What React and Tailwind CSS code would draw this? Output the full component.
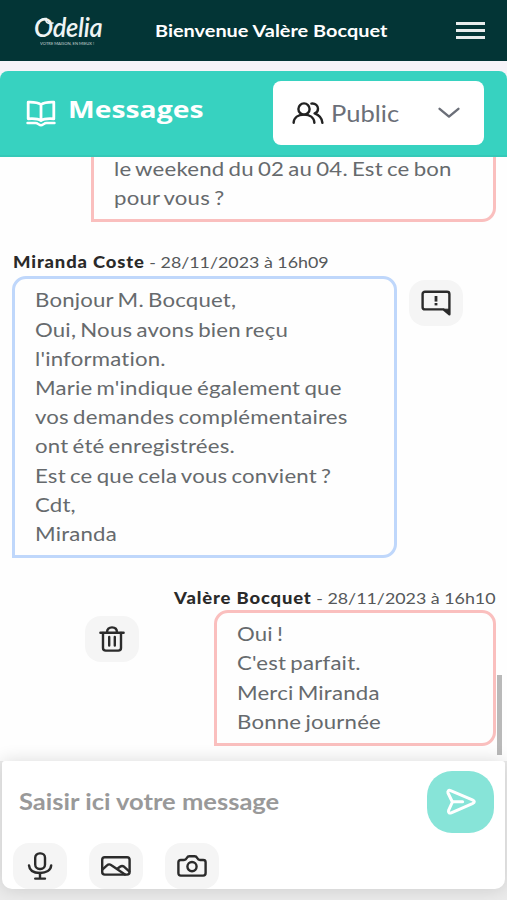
import React, { useState } from "react";

const MESSAGES = [
  {
    id: 1,
    mine: true,
    cut: true,
    lines: ["le weekend du 02 au 04. Est ce bon", "pour vous ?"],
  },
  {
    id: 2,
    mine: false,
    author: "Miranda Coste",
    date: "28/11/2023 à 16h09",
    lines: [
      "Bonjour M. Bocquet,",
      "Oui, Nous avons bien reçu",
      "l'information.",
      "Marie m'indique également que",
      "vos demandes complémentaires",
      "ont été enregistrées.",
      "Est ce que cela vous convient ?",
      "Cdt,",
      "Miranda",
    ],
  },
  {
    id: 3,
    mine: true,
    author: "Valère Bocquet",
    date: "28/11/2023 à 16h10",
    lines: ["Oui !", "C'est parfait.", "Merci Miranda", "Bonne journée"],
  },
];

const Icon = ({ children, className = "", width = 30, height = 28, strokeWidth = 2.4 }) => (
  <svg
    className={className}
    width={width}
    height={height}
    viewBox={`0 0 ${width} ${height}`}
    fill="none"
    stroke="currentColor"
    strokeWidth={strokeWidth}
    strokeLinecap="round"
    strokeLinejoin="round"
  >
    {children}
  </svg>
);

const BookIcon = () => (
  <Icon className="text-white" width={30} height={27} strokeWidth={2.8}>
    <path d="M15 4.6C12.5 2.8 8 2 2.2 2.2V18.8C8 18.4 12 18.4 15 20.6C18 18.4 22 18.4 27.8 18.8V2.2C22 2 17.5 2.8 15 4.6ZM15 4.6V20" />
    <path d="M1.5 23H9.5C12 23 13 25.2 15 25.2S18 23 20.5 23H28.5" strokeWidth={2.4} />
  </Icon>
);

const PeopleIcon = () => (
  <Icon className="text-[#222]" width={32} height={22} strokeWidth={2.4}>
    <circle cx="12" cy="7" r="5.6" />
    <path d="M1.6 20.8C2 15.6 6.2 12.6 12 12.6S22 15.6 22.4 20.8" />
    <path d="M19.4 1.6C23.6 1.2 26 3.6 26 6.8C26 9.2 24.6 10.8 22.6 11.4C27 13 30 16 30.4 20.8" />
  </Icon>
);

const AlertIcon = () => (
  <Icon width={30} height={26}>
    <path d="M4 1.8H26C27.4 1.8 28.4 2.6 28.4 4V24.2L22.4 19.4H4C2.6 19.4 1.6 18.6 1.6 17.2V4C1.6 2.6 2.6 1.8 4 1.8Z" />
    <path d="M22.6 19.2H28.2V23.8Z" fill="currentColor" strokeWidth={1} />
    <path d="M15 6V11.6" strokeWidth={2.8} strokeLinecap="butt" />
    <path d="M15 13V15.4" strokeWidth={2.8} strokeLinecap="butt" />
  </Icon>
);

const TrashIcon = () => (
  <Icon width={26} height={26}>
    <path d="M1.4 6.8H24.6" />
    <path d="M4 7V22C4 23.6 5 24.6 6.8 24.6H19.2C21 24.6 22 23.6 22 22V7" />
    <path d="M8 6.4C8 3 10 1.4 13 1.4S18 3 18 6.4" />
    <path d="M10.2 11V19.6M15.8 11V19.6" />
  </Icon>
);

const MicIcon = () => (
  <Icon width={26} height={28}>
    <rect x="8.2" y="1.4" width="9.8" height="15.6" rx="4.4" />
    <path d="M2 13.4C2.4 18.4 6.8 21 13 21S23.8 18.4 24.2 13.4" />
    <path d="M13 21V26.4M8.2 26.6H18" />
  </Icon>
);

const ImageIcon = () => (
  <Icon width={30} height={20}>
    <rect x="1.2" y="1.2" width="27.4" height="17.4" rx="2.6" />
    <path d="M1.6 13.4L6 9.4C7.2 8.2 9 8.2 10.4 9.2L24 18.4" />
    <path d="M16.4 12.8L19 10.8C20.4 9.8 22 10 23.2 10.8L28.2 15.4" />
  </Icon>
);

const CameraIcon = () => (
  <Icon width={30} height={22}>
    <path d="M3.8 5H7C8.6 5 9.2 4.2 9.8 3C10.4 1.8 11 1.2 12.4 1.2H17.6C19 1.2 19.6 1.8 20.2 3C20.8 4.2 21.4 5 23 5H26.2C27.8 5 28.6 5.8 28.6 7.2V18C28.6 19.6 27.8 20.6 26.2 20.6H3.8C2.2 20.6 1.4 19.6 1.4 18V7.2C1.4 5.8 2.2 5 3.8 5Z" />
    <circle cx="15" cy="11.6" r="4.6" />
  </Icon>
);

const SendIcon = () => (
  <Icon className="text-white" width={32} height={28} strokeWidth={3}>
    <path d="M3 5C2.4 3 3.6 1.8 5.6 2.6L27.4 11.8C30 13 30 14.4 27.4 15.6L6.2 24.8C4.2 25.6 3 24.4 3.6 22.4L7.4 14Z" />
    <path d="M7.6 13.7H17.6" />
  </Icon>
);

const Logo = () => (
  <div className="relative w-[70px] text-[#eef4f4]">
    <div className="h-[27px] w-max origin-left scale-x-[0.98] font-[Lato] text-[26px] leading-[24px] font-semibold italic tracking-[-0.3px]">
      Odelia
    </div>
    <div className="h-[4px] w-max origin-top-left scale-[0.34] pl-[18px] font-[Lato] text-[12px] leading-[12px] whitespace-nowrap opacity-80">
      VOTRE MAISON, EN MIEUX !
    </div>
    {/* flourish over the initial */}
    <Icon className="absolute top-[2px] left-[3px]" width={18} height={9} strokeWidth={1.6}>
      <path d="M2 6C3 2.4 6.4 1 9.4 1.6C8 4.8 10.6 7.4 16 6" />
    </Icon>
  </div>
);

const ActionButton = ({ children }) => (
  <button className="flex h-[46px] w-[54px] shrink-0 items-center justify-center rounded-[16px] bg-[#f5f5f5] text-[#2b2b2b]">
    {children}
  </button>
);

const Bubble = ({ message }) => (
  <div
    className={`border-[3px] pl-[20px] font-[Lato] text-[18.5px] leading-[29.2px] tracking-[0.16px] text-[#666a6d] [word-spacing:-1.4px] ${
      message.mine ? "border-[#fabfbe]" : "w-[385px] border-[#bfd7fb]"
    } ${
      message.cut
        ? "-mt-[2px] w-[405px] rounded-br-[14px] border-t-0 pb-[6px]"
        : "rounded-t-[14px] rounded-br-[14px] pt-[7px] pb-[6px]"
    } ${message.mine && !message.cut ? "w-[282px]" : ""}`}
  >
    {message.lines.map((line) => (
      <p key={line} className="w-max origin-left scale-x-[1.2] whitespace-nowrap">
        {line}
      </p>
    ))}
  </div>
);

const MessageMeta = ({ message }) => (
  <div
    className={`flex h-[28px] items-center font-[Lato] text-[15.5px] text-[#55585a] ${
      message.mine ? "justify-end" : "pl-px"
    }`}
  >
    <p className={`w-max scale-x-[1.15] whitespace-nowrap ${message.mine ? "origin-right" : "origin-left"}`}>
      <b className="text-[16px] font-black tracking-[0.75px] text-[#2a2a2a]">{message.author}</b> - {message.date}
    </p>
  </div>
);

const App = () => {
  const [text, setText] = useState("");

  return (
    <div className="flex h-[900px] w-[507px] flex-col overflow-hidden bg-[#f6f4f9]">
      {/* Top bar */}
      <header className="flex h-[61px] shrink-0 items-center bg-[#033536] pl-[34px]">
        <Logo />
        <p className="ml-[51px] w-[301px] font-[Lato] text-[17px] font-bold whitespace-nowrap text-white">
          <span className="inline-block origin-left scale-x-[1.17]">Bienvenue Valère Bocquet</span>
        </p>
        <button className="flex w-[29px] flex-col gap-[4px]">
          <span className="h-[3px] bg-[#e8eded]" />
          <span className="h-[3px] bg-[#e8eded]" />
          <span className="h-[3px] bg-[#e8eded]" />
        </button>
      </header>

      {/* Title and channel */}
      <div className="mt-[10px] flex h-[86px] shrink-0 items-center rounded-t-[8px] border-b-2 border-[#35c9b8] bg-[#37d2c0] pl-[26px]">
        <BookIcon />
        <h1 className="-mt-[8px] ml-[12px] w-[205px] font-['Open_Sans'] text-[24px] font-bold text-white">
          <span className="inline-block origin-left scale-x-[1.18]">Messages</span>
        </h1>
        <button className="flex h-[64px] w-[211px] items-center rounded-[8px] bg-white pl-[19px]">
          <PeopleIcon />
          <span className="ml-[7px] w-[107px] text-left font-[Lato] text-[23px] text-[#6b6f78]">
            <span className="inline-block origin-left scale-x-[1.11]">Public</span>
          </span>
          <Icon className="text-[#6b6f78]" width={22} height={12}>
            <path d="M1.6 1.8L11 9.6L20.4 1.8" />
          </Icon>
        </button>
      </div>

      {/* Thread */}
      <main className="relative h-[604px] shrink-0 overflow-hidden bg-[#fefefe] pr-[11px] pl-[12px]">
        <div className="flex justify-end">
          <Bubble message={MESSAGES[0]} />
        </div>
        <div className="mt-[26px]">
          <MessageMeta message={MESSAGES[1]} />
          <div className="flex gap-[12px]">
            <Bubble message={MESSAGES[1]} />
            <div className="pt-[4px]">
              <ActionButton>
                <AlertIcon />
              </ActionButton>
            </div>
          </div>
        </div>
        <div className="mt-[26px]">
          <MessageMeta message={MESSAGES[2]} />
          <div className="-mt-[2px] flex justify-end gap-[75px]">
            <div className="pt-[6px]">
              <ActionButton>
                <TrashIcon />
              </ActionButton>
            </div>
            <Bubble message={MESSAGES[2]} />
          </div>
        </div>
        <div className="absolute right-[5px] bottom-[6px] h-[80px] w-[5px] bg-[#b9b9b9]" />
      </main>

      {/* Composer */}
      <footer className="relative h-[139px] shrink-0 bg-[#ebebeb] px-[2px]">
        <div className="flex h-[128px] flex-col rounded-t-[3px] rounded-b-[10px] bg-white shadow-[0_0_18px_rgba(0,0,0,0.14)]">
          <div className="flex h-[82px] items-center pl-[17px]">
            <div className="-mt-[2px] w-[408px]">
              <input
                className="w-[340px] origin-left scale-x-[1.16] font-[Lato] text-[22px] font-bold outline-none placeholder:text-[#999]"
                placeholder="Saisir ici votre message"
                value={text}
                onChange={(e) => setText(e.target.value)}
              />
            </div>
            <button className="flex h-[62px] w-[67px] items-center justify-center rounded-[25px] bg-[#87e4d8]">
              <SendIcon />
            </button>
          </div>
          <div className="flex gap-[22px] pl-[11px]">
            <ActionButton>
              <MicIcon />
            </ActionButton>
            <ActionButton>
              <ImageIcon />
            </ActionButton>
            <ActionButton>
              <CameraIcon />
            </ActionButton>
          </div>
        </div>
      </footer>
    </div>
  );
};

export default App;
